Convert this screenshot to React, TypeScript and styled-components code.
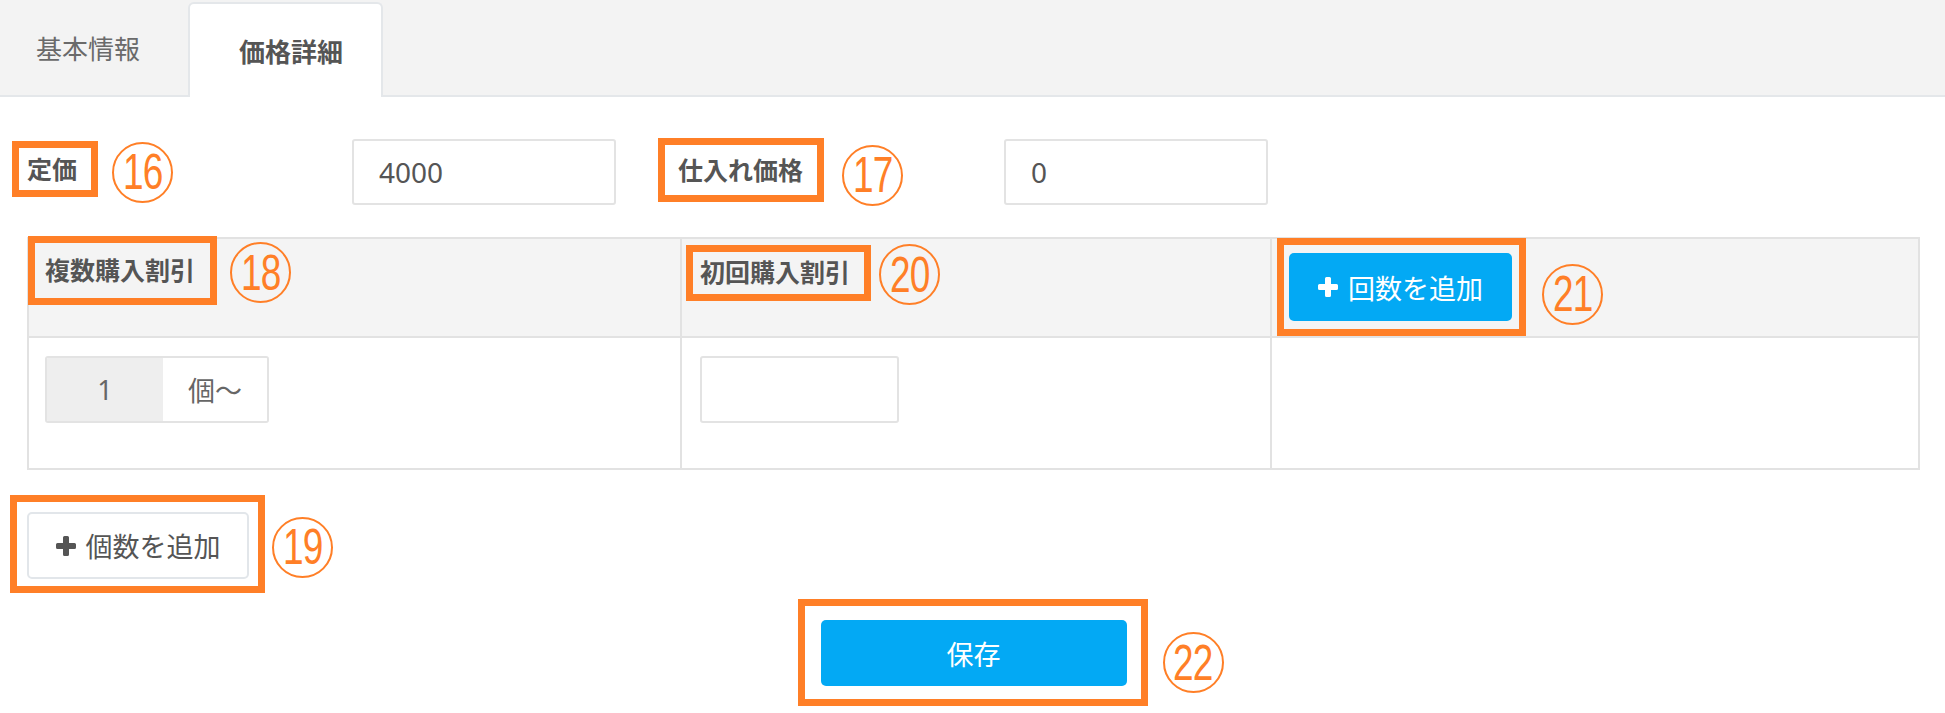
import React from 'react'
import styled, { createGlobalStyle } from 'styled-components'

const ORANGE = '#ff7f27'
const BLUE = '#03a9f4'
const LINE = '#e2e2e2'

const GlobalStyle = createGlobalStyle`
  html, body {
    margin: 0;
    padding: 0;
    background: #ffffff;
  }
  body {
    font-family: "Noto Sans", "Noto Sans CJK JP", sans-serif;
    color: #555555;
  }
  * {
    box-sizing: border-box;
  }
`

const Page = styled.div`
  width: 1945px;
  height: 713px;
  overflow: hidden;
`

const TabBar = styled.div`
  height: 97px;
  background: #f3f3f3;
  border-bottom: 2px solid #e4e7ea;
  display: flex;
  align-items: flex-end;
`

const Tab = styled.div<{ $active?: boolean; $w: number; $pl: number }>`
  width: ${p => p.$w}px;
  height: 95px;
  padding-left: ${p => p.$pl}px;
  display: flex;
  align-items: center;
  font-size: 26px;
  color: #6a6a6a;
  ${p => p.$active && `
    background: #ffffff;
    border: 2px solid #e4e7ea;
    border-bottom: none;
    border-radius: 6px 6px 0 0;
    margin-bottom: -2px;
    font-weight: 700;
    color: #555555;
  `}
`

const PriceRow = styled.div`
  display: flex;
  align-items: center;
  height: 70px;
  margin: 40px 0 0 12px;
`

const LabelCell = styled.div<{ $w: number; $ml?: number; $gap: number }>`
  width: ${p => p.$w}px;
  margin-left: ${p => p.$ml ?? 0}px;
  display: flex;
  align-items: center;
  gap: ${p => p.$gap}px;
`

// orange annotation frame drawn around an element
const Mark = styled.div<{ $pad: string; $h?: number; $dy?: number }>`
  display: inline-flex;
  align-items: center;
  flex-shrink: 0;
  border: 7px solid ${ORANGE};
  padding: ${p => p.$pad};
  ${p => p.$h ? `height: ${p.$h}px;` : ''}
  transform: translateY(${p => p.$dy ?? 0}px);
`

const Label = styled.span`
  font-size: 25px;
  font-weight: 700;
  line-height: 1;
  color: #555555;
  white-space: nowrap;
`

const Badge = styled.span<{ $dy?: number }>`
  width: 61px;
  height: 61px;
  flex-shrink: 0;
  border: 2.5px solid ${ORANGE};
  border-radius: 50%;
  display: inline-flex;
  align-items: center;
  justify-content: center;
  color: ${ORANGE};
  transform: translateY(${p => p.$dy ?? 0}px);
`

const BadgeNum = styled.span`
  font-family: "Liberation Sans", sans-serif;
  font-size: 50px;
  line-height: 1;
  letter-spacing: -1px;
  transform: scaleX(0.74);
`

const TextInput = styled.input<{ $w: number; $h?: number }>`
  width: ${p => p.$w}px;
  height: ${p => p.$h ?? 66}px;
  border: 2px solid #e3e3e3;
  border-radius: 3px;
  padding: 0 0 0 25px;
  font-family: "Noto Sans", "Noto Sans CJK JP", sans-serif;
  font-size: 28px;
  color: #555555;
  background: #ffffff;
  outline: none;
`

const Table = styled.div`
  display: grid;
  grid-template-columns: 653px 590px 1fr;
  margin: 30px 25px 0 27px;
  border-top: 2px solid ${LINE};
  border-left: 2px solid ${LINE};
`

const Cell = styled.div<{ $head?: boolean; $pad?: string }>`
  height: ${p => p.$head ? 99 : 132}px;
  padding: ${p => p.$pad ?? '0'};
  background: ${p => p.$head ? '#f4f4f4' : '#ffffff'};
  border-right: 2px solid ${LINE};
  border-bottom: 2px solid ${LINE};
  display: flex;
  align-items: flex-start;
`

const Annotated = styled.div<{ $gap: number; $m?: string }>`
  display: flex;
  align-items: center;
  gap: ${p => p.$gap}px;
  margin: ${p => p.$m ?? '0'};
`

const InputGroup = styled.div`
  display: flex;
  height: 67px;
  border: 2px solid #e3e3e3;
  border-radius: 3px;
  overflow: hidden;
  font-size: 27px;
  color: #666666;
`

const Addon = styled.div<{ $w: number; $gray?: boolean; $center?: boolean }>`
  width: ${p => p.$w}px;
  background: ${p => p.$gray ? '#eeeeee' : '#ffffff'};
  display: flex;
  align-items: center;
  justify-content: ${p => p.$center ? 'center' : 'flex-start'};
  padding-left: ${p => p.$center ? 0 : 25}px;
`

const Button = styled.button<{ $primary?: boolean; $w: number; $h: number }>`
  width: ${p => p.$w}px;
  height: ${p => p.$h}px;
  display: flex;
  align-items: center;
  justify-content: center;
  gap: 10px;
  font-family: "Noto Sans", "Noto Sans CJK JP", sans-serif;
  font-size: 27px;
  border-radius: 5px;
  cursor: pointer;
  padding: 0;
  background: ${p => p.$primary ? BLUE : '#ffffff'};
  color: ${p => p.$primary ? '#ffffff' : '#555555'};
  border: ${p => p.$primary ? 'none' : '2px solid #e2e6ea'};
`

const AddRow = styled.div`
  display: flex;
  align-items: center;
  gap: 7px;
  margin: 25px 0 0 10px;
`

const SaveRow = styled.div`
  display: grid;
  grid-template-columns: 1fr auto 1fr;
  align-items: center;
  margin-top: 6px;
  & > :last-child {
    justify-self: start;
    margin-left: 15px;
  }
`

const Plus = ({ color }: { color: string }) => (
  <svg width="20" height="20" viewBox="0 0 20 20">
    <path d="M7 1.5q0-1.5 1.5-1.5h3q1.5 0 1.5 1.5V7h5.5q1.5 0 1.5 1.5v3q0 1.5-1.5 1.5H13v5.5q0 1.5-1.5 1.5h-3Q7 20 7 18.5V13H1.5Q0 13 0 11.5v-3Q0 7 1.5 7H7z" fill={color} />
  </svg>
)

const Num = ({ n, dy }: { n: string; dy?: number }) => (
  <Badge $dy={dy}>
    <BadgeNum>{n}</BadgeNum>
  </Badge>
)

export default function App () {
  return (
    <Page>
      <GlobalStyle />
      <TabBar>
        <Tab $w={188} $pl={36}>基本情報</Tab>
        <Tab $w={195} $pl={49} $active>価格詳細</Tab>
      </TabBar>

      <PriceRow>
        <LabelCell $w={340} $gap={14}>
          <Mark $pad="0 14px 0 8px" $h={56} $dy={-3}><Label>定価</Label></Mark>
          <Num n="16" dy={0} />
        </LabelCell>
        <TextInput $w={264} defaultValue="4000" />
        <LabelCell $w={346} $ml={42} $gap={18}>
          <Mark $pad="0 14px 0 13px" $h={64} $dy={-2}><Label>仕入れ価格</Label></Mark>
          <Num n="17" dy={3} />
        </LabelCell>
        <TextInput $w={264} defaultValue="0" />
      </PriceRow>

      <Table>
        <Cell $head>
          <Annotated $gap={13} $m="-3px 0 0 -1px">
            <Mark $pad="0 15px 0 10px" $h={69}><Label>複数購入割引</Label></Mark>
            <Num n="18" dy={2} />
          </Annotated>
        </Cell>
        <Cell $head>
          <Annotated $gap={8} $m="3px 0 0 4px">
            <Mark $pad="0 14px 0 7px" $h={56}><Label>初回購入割引</Label></Mark>
            <Num n="20" dy={2} />
          </Annotated>
        </Cell>
        <Cell $head>
          <Annotated $gap={16} $m="-1px 0 0 5px">
            <Mark $pad="8px 7px 8px 5px">
              <Button $primary $w={223} $h={68}>
                <Plus color="#ffffff" />
                <span>回数を追加</span>
              </Button>
            </Mark>
            <Num n="21" dy={7} />
          </Annotated>
        </Cell>

        <Cell $pad="18px 0 0 16px">
          <InputGroup>
            <Addon $w={116} $gray $center>1</Addon>
            <Addon $w={104}>個〜</Addon>
          </InputGroup>
        </Cell>
        <Cell $pad="18px 0 0 18px">
          <TextInput $w={199} $h={67} />
        </Cell>
        <Cell />
      </Table>

      <AddRow>
        <Mark $pad="10px 9px 7px 10px">
          <Button $w={222} $h={67}>
            <Plus color="#555555" />
            <span>個数を追加</span>
          </Button>
        </Mark>
        <Num n="19" dy={3} />
      </AddRow>

      <SaveRow>
        <div />
        <Mark $pad="14px 14px 13px 16px">
          <Button $primary $w={306} $h={66}>保存</Button>
        </Mark>
        <Num n="22" dy={10} />
      </SaveRow>
    </Page>
  )
}
